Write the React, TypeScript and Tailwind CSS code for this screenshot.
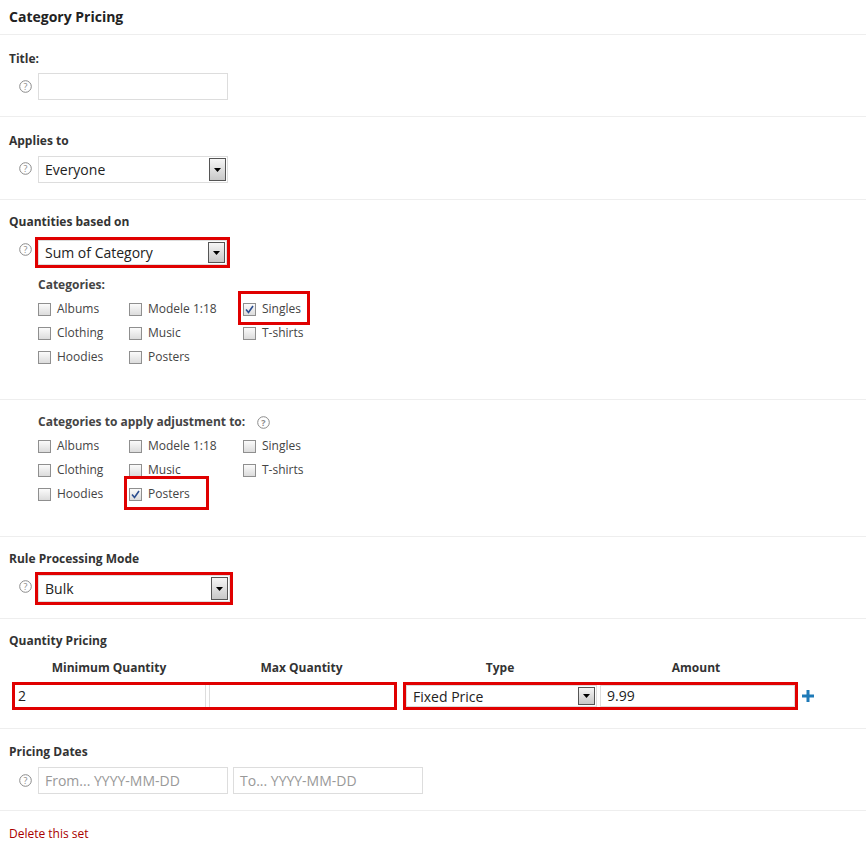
import React from "react";

const F = { fontFamily: '"Open Sans", "Noto Sans", sans-serif' };

function Help() {
  return (
    <svg width="13" height="13" viewBox="0 0 13 13" className="shrink-0">
      <circle cx="6.5" cy="6.5" r="5.8" fill="none" stroke="#8a8a8a" strokeWidth="1" />
      <text x="6.5" y="9.8" textAnchor="middle" fontSize="9" fill="#8a8a8a" fontFamily="Open Sans, sans-serif">?</text>
    </svg>
  );
}

function Arrow({ h }: { h: number }) {
  return (
    <div className="w-[17px] shrink-0 border border-[#555] bg-gradient-to-b from-[#f6f6f6] to-[#c8c8c8] flex items-center justify-center" style={{ height: h }}>
      <svg width="7" height="4" viewBox="0 0 7 4"><path d="M0 0h7L3.5 4z" fill="#000" /></svg>
    </div>
  );
}

function Select({ text, w, h = 27, size = "text-[14px]" }: { text: string; w: number; h?: number; size?: string }) {
  return (
    <div className="flex items-center border border-[#ddd] bg-white pl-[6px] pr-[1px]" style={{ width: w, height: h }}>
      <span className={`flex-1 ${size} text-[#222]`}>{text}</span>
      <Arrow h={h - 4} />
    </div>
  );
}

function Red({ children }: { children: React.ReactNode }) {
  return <div className="border-[3px] border-[#e00000] -ml-[3px]">{children}</div>;
}

function Cb({ label, checked }: { label: string; checked?: boolean }) {
  return (
    <div className="flex items-center h-[24px] text-[12px] text-[#444]">
      <div className="w-[13px] h-[13px] border border-[#8f8f8f] bg-gradient-to-b from-[#fbfbfb] to-[#dcdcdc] flex items-center justify-center mr-[6px]">
        {checked && (
          <svg width="9" height="9" viewBox="0 0 9 9"><path d="M1 4.5l2.5 3L8 1" fill="none" stroke="#2b4d8f" strokeWidth="1.6" /></svg>
        )}
      </div>
      {label}
    </div>
  );
}

function Grid({ posters, singles }: { posters?: boolean; singles?: boolean }) {
  const cols: [string, boolean?][][] = [
    [["Albums"], ["Clothing"], ["Hoodies"]],
    [["Modele 1:18"], ["Music"], ["Posters", posters]],
    [["Singles", singles], ["T-shirts"]],
  ];
  const ws = [91, 114, 80];
  return (
    <div className="flex ml-[38px]">
      {cols.map((c, i) => (
        <div key={i} style={{ width: ws[i] }}>
          {c.map(([l, ch]) =>
            ch ? (
              <div key={l} className="relative">
                <div className="absolute left-[-5px] top-[-6px] h-[34px] border-[3px] border-[#e00000]" style={{ width: l === "Singles" ? 72 : 85 }} />
                <Cb label={l} checked />
              </div>
            ) : (
              <Cb key={l} label={l} />
            )
          )}
        </div>
      ))}
    </div>
  );
}

const label = "text-[12px] font-bold text-[#333] leading-[16px] ml-[9px]";
const input = "h-[27px] w-[190px] border border-[#ddd] bg-white text-[14px] text-[#999] pl-[6px] flex items-center";

export default function App() {
  return (
    <div style={F} className="w-[866px] h-[852px] bg-white">
      <div className="h-[35px] border-b border-[#eee] pl-[9px] pt-[6px] text-[14px] font-bold text-[#222]">Category Pricing</div>

      <div className="h-[82px] border-b border-[#eee] pt-[16px]">
        <div className={label}>Title:</div>
        <div className="flex items-center ml-[19px] mt-[6px] gap-[6px]"><Help /><div className={input} /></div>
      </div>

      <div className="h-[83px] border-b border-[#eee] pt-[16px]">
        <div className={label}>Applies to</div>
        <div className="flex items-start ml-[19px] mt-[7px] gap-[6px]"><div className="pt-[6px]"><Help /></div><Select text="Everyone" w={190} /></div>
      </div>

      <div className="h-[200px] border-b border-[#eee] pt-[14px]">
        <div className={label}>Quantities based on</div>
        <div className="flex items-start ml-[19px] mt-[7px] gap-[6px]">
          <div className="pt-[6px]"><Help /></div>
          <Red><Select text="Sum of Category" w={189} h={25} /></Red>
        </div>
        <div className="text-[12px] font-bold text-[#444] ml-[38px] mt-[9px] leading-[16px]">Categories:</div>
        <div className="mt-[4px]"><Grid singles /></div>
      </div>

      <div className="h-[137px] border-b border-[#eee] pt-[14px]">
        <div className="flex items-center gap-[12px] ml-[38px] text-[12px] font-bold text-[#444] leading-[16px]">Categories to apply adjustment to: <Help /></div>
        <div className="mt-[4px]"><Grid posters /></div>
      </div>

      <div className="h-[82px] border-b border-[#eee] pt-[14px]">
        <div className={label}>Rule Processing Mode</div>
        <div className="flex items-start ml-[19px] mt-[5px] gap-[6px]">
          <div className="pt-[8px]"><Help /></div>
          <Red><Select text="Bulk" w={192} h={27} /></Red>
        </div>
      </div>

      <div className="h-[110px] border-b border-[#eee] pt-[14px]">
        <div className={label}>Quantity Pricing</div>
        <div className="flex mt-[11px] text-[12px] font-bold text-[#333] leading-[16px] ml-[12px]">
          <div className="w-[194px] text-center">Minimum Quantity</div>
          <div className="w-[191px] text-center">Max Quantity</div>
          <div className="w-[196px] text-center pl-[10px]">Type</div>
          <div className="w-[196px] text-center pl-[10px]">Amount</div>
        </div>
        <div className="flex items-center mt-[6px] ml-[12px]">
          <div className="flex border-[3px] border-[#e00000] w-[385px] h-[28px]">
            <div className="w-[191px] border-r border-[#ddd] text-[14px] text-[#222] pl-[3px] leading-[22px]">2</div>
            <div className="w-[3px]" />
            <div className="flex-1 border-l border-[#ddd]" />
          </div>
          <div className="flex border-[3px] border-[#e00000] w-[395px] h-[28px] ml-[6px] items-center">
            <Select text="Fixed Price" w={191} h={22} />
            <div className="w-[3px]" />
            <div className="flex-1 h-[22px] border border-[#ddd] text-[14px] text-[#222] pl-[6px] leading-[20px]">9.99</div>
          </div>
          <svg width="14" height="14" viewBox="0 0 14 14" className="ml-[3px]"><path d="M7 1v12M1 7h12" stroke="#1e7ab8" strokeWidth="3" /></svg>
        </div>
      </div>

      <div className="h-[82px] border-b border-[#eee] pt-[15px]">
        <div className={label}>Pricing Dates</div>
        <div className="flex items-center ml-[19px] mt-[7px] gap-[6px]">
          <Help />
          <div className={input}>From... YYYY-MM-DD</div>
          <div className={input + " -ml-[1px]"}>To... YYYY-MM-DD</div>
        </div>
      </div>

      <div className="pt-[15px] ml-[9px] text-[12px] text-[#a00] leading-[16px]">Delete this set</div>
    </div>
  );
}
